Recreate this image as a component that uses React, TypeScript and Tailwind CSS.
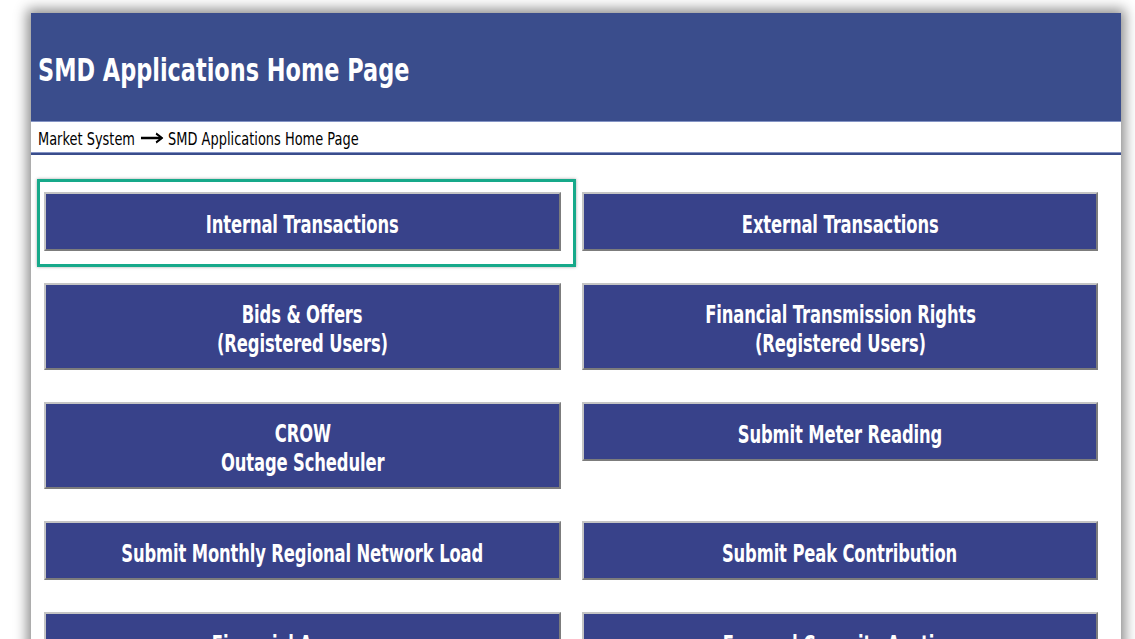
import React from "react";

type Tile = { lines: string[]; tall?: boolean; focused?: boolean };

const rows: [Tile, Tile][] = [
  [{ lines: ["Internal Transactions"], focused: true }, { lines: ["External Transactions"] }],
  [
    { lines: ["Bids & Offers", "(Registered Users)"], tall: true },
    { lines: ["Financial Transmission Rights", "(Registered Users)"], tall: true },
  ],
  [{ lines: ["CROW", "Outage Scheduler"], tall: true }, { lines: ["Submit Meter Reading"] }],
  [{ lines: ["Submit Monthly Regional Network Load"] }, { lines: ["Submit Peak Contribution"] }],
  [{ lines: ["Financial Assurance"] }, { lines: ["Forward Capacity Auction"] }],
];

function AppButton({ tile }: { tile: Tile }) {
  return (
    <div className="relative">
      {tile.focused && (
        <div className="absolute -left-[7px] -top-[13px] -right-[15px] -bottom-[16px] border-[3px] border-[#17a98a] shadow-[0_0_3px_rgba(0,0,0,0.35)]" />
      )}
      <div
        className={
          "flex flex-col items-center justify-center border-2 border-t-[#c4c4c4] border-l-[#c4c4c4] border-b-[#7c7c7c] border-r-[#7c7c7c] bg-[#38428a] pt-[5px] text-white " +
          (tile.tall ? "h-[87px]" : "h-[59px]")
        }
      >
        {tile.lines.map((line) => (
          <span
            key={line}
            className="inline-block scale-x-[0.655] whitespace-nowrap text-[25px] font-bold leading-[29px] tracking-[-0.2px]"
          >
            {line}
          </span>
        ))}
      </div>
    </div>
  );
}

export default function App() {
  return (
    <div className="h-[639px] overflow-hidden bg-white pt-[13px] pl-[31px] pr-[14px] font-['DejaVu_Sans',Verdana,sans-serif]">
      <div className="bg-white shadow-[0_0_12px_4px_rgba(0,0,0,0.45)]">
        <div className="flex h-[109px] items-center border-b border-[#8393c4] bg-[#3a4d8c] pl-[7px] pt-[5px]">
          <h1 className="inline-block origin-left scale-x-[0.7] whitespace-nowrap text-[32px] font-bold text-white">
            SMD Applications Home Page
          </h1>
        </div>
        <div className="flex h-[30px] items-center pl-[7px] pt-[2px]">
          <span className="inline-flex origin-left scale-x-[0.72] items-center whitespace-nowrap text-[18px] text-black">
            Market System
            <svg width="32" height="12" viewBox="0 0 32 12" className="mx-[7px]">
              <path d="M1 6h27" stroke="black" strokeWidth="2.4" />
              <path d="M22 1.5 L30 6 L22 10.5" fill="none" stroke="black" strokeWidth="2.4" />
            </svg>
            SMD Applications Home Page
          </span>
        </div>
        <div className="h-[1px] bg-[#8393c4]" />
        <div className="h-[2px] bg-[#3a4d8c]" />

        <div className="grid grid-cols-[517px_516px] items-start gap-x-[21px] gap-y-[32px] pl-[13px] pt-[37px] pb-[40px]">
          {rows.map(([left, right], i) => (
            <React.Fragment key={i}>
              <AppButton tile={left} />
              <AppButton tile={right} />
            </React.Fragment>
          ))}
        </div>
      </div>
    </div>
  );
}
